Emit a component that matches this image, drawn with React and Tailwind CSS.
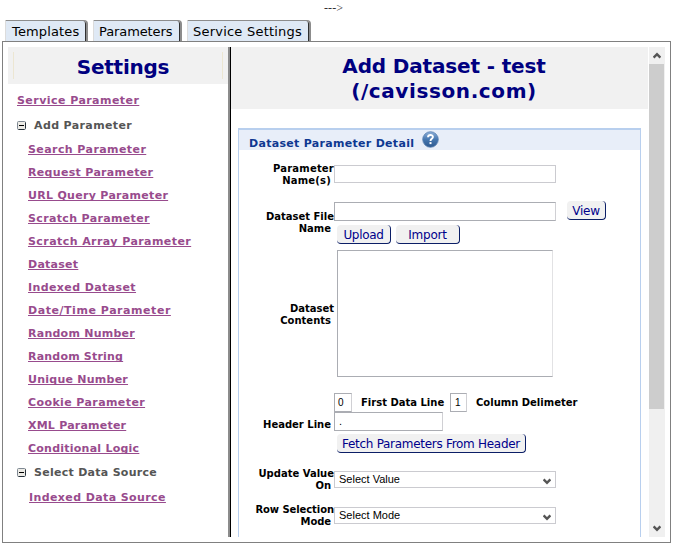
import React from "react";

const TABS = [
  { label: "Templates", box: "w-[83px]", text: "pl-[6px] tracking-[0.15px]" },
  { label: "Parameters", box: "w-[89px]", text: "pl-[5px] tracking-[-0.1px]" },
  { label: "Service Settings", box: "w-[124px]", text: "pl-[5px] tracking-[0.22px]" },
];

const PARAMETER_LINKS = [
  { name: "Search Parameter", spacing: "tracking-[0.42px]" },
  { name: "Request Parameter", spacing: "tracking-[0.32px]" },
  { name: "URL Query Parameter", spacing: "tracking-[0.3px]" },
  { name: "Scratch Parameter", spacing: "tracking-[0.35px]" },
  { name: "Scratch Array Parameter", spacing: "tracking-[0.43px]" },
  { name: "Dataset", spacing: "tracking-[0.26px]" },
  { name: "Indexed Dataset", spacing: "tracking-[0.4px]" },
  { name: "Date/Time Parameter", spacing: "tracking-[0.55px]" },
  { name: "Random Number", spacing: "tracking-[0.25px]" },
  { name: "Random String", spacing: "tracking-[0.2px]" },
  { name: "Unique Number", spacing: "tracking-[0.25px]" },
  { name: "Cookie Parameter", spacing: "tracking-[0.4px]" },
  { name: "XML Parameter", spacing: "tracking-[0.22px]" },
  { name: "Conditional Logic", spacing: "tracking-[0.24px]" },
];

function Tab({ label, box, text }) {
  return (
    <div className={`h-[21px] shrink-0 rounded-tr-[4px] border-t border-l border-r-2 border-t-[#8c8c8c] border-l-[#dcdcdc] border-r-[#8c8c8c] ${box}`}>
      <div className={`h-full rounded-tr-[3px] border-r border-[#303030] bg-[#dfe9f5] text-[13px] leading-[21px] whitespace-nowrap ${text}`}>
        {label}
      </div>
    </div>
  );
}

function SideLink({ spacing, children }) {
  return (
    <a className={`block h-[23px] text-[11px] leading-[23px] font-bold whitespace-nowrap text-[#984b8d] underline decoration-1 underline-offset-1 [text-decoration-skip-ink:none] ${spacing}`}>
      {children}
    </a>
  );
}

function Group({ spacing, children }) {
  return (
    <div className={`flex h-[23px] items-center gap-[8px] text-[11px] font-bold whitespace-nowrap text-[#555] ${spacing}`}>
      <svg className="h-[9px] w-[9px] shrink-0" viewBox="0 0 9 9">
        <rect x="0.5" y="0.5" width="8" height="8" rx="1" fill="#ecebe6" stroke="#7f8993" />
        <path d="M8.5 1.5V7.5M1.5 8.5H7.5" stroke="#26303a" />
        <path d="M2 4.5h5" stroke="#000" />
      </svg>
      <span className="pt-px">{children}</span>
    </div>
  );
}

function Label({ top, bottom, className }) {
  return (
    <div className={`w-[95px] shrink-0 text-right text-[10px] leading-[12px] font-bold whitespace-nowrap ${className}`}>
      {top && <div>{top}</div>}
      <div className="pr-[3px]">{bottom}</div>
    </div>
  );
}

function Field({ className, children }) {
  return (
    <div className={`shrink-0 border bg-white font-['Liberation_Sans',Arial,sans-serif] ${className}`}>
      {children}
    </div>
  );
}

function Button({ className, children }) {
  return (
    <div className={`h-[19px] shrink-0 rounded-[4px] border-r border-b border-[#0b1e66] bg-[#f1f1f1] text-center text-[12px] leading-[20px] whitespace-nowrap text-[#00008b] ${className}`}>
      {children}
    </div>
  );
}

function Chevron({ up }) {
  return (
    <svg className={up ? "h-[7px] w-[8px] rotate-180" : "h-[7px] w-[8px]"} viewBox="0 0 8 7">
      <path d="M0.6 1.4L4 4.8L7.4 1.4" fill="none" stroke="#555" strokeWidth="2.5" />
    </svg>
  );
}

function Select({ children }) {
  return (
    <div className="flex h-[17px] w-[222px] shrink-0 items-center justify-between border border-[#cbcbd0] pr-[4px] pl-[4px] font-['Liberation_Sans',Arial,sans-serif] text-[11px] leading-[15px]">
      <span>{children}</span>
      <span className="flex pt-[4px]"><Chevron /></span>
    </div>
  );
}

function HelpIcon() {
  return (
    <svg className="mt-px h-[17px] w-[17px]" viewBox="0 0 17 17">
      <defs>
        <linearGradient id="help" x1="0" y1="0" x2="0" y2="1">
          <stop offset="0" stopColor="#8fb0d8" />
          <stop offset="0.5" stopColor="#4677b0" />
          <stop offset="1" stopColor="#2c588f" />
        </linearGradient>
      </defs>
      <circle cx="8.5" cy="8.5" r="7.8" fill="url(#help)" stroke="#5a82b2" strokeWidth="0.8" />
      <path d="M6 6.2C6.1 3.3 11 3.4 10.9 6C10.9 7.8 8.5 7.9 8.5 9.9" fill="none" stroke="#fff" strokeWidth="1.9" />
      <rect x="7.5" y="11.1" width="2" height="2" fill="#fff" />
    </svg>
  );
}

function Sidebar() {
  return (
    <div className="w-[220px] shrink-0">
      <div className="flex h-[37px] bg-[#f1f1f1] px-[5px] py-[5px]">
        <h1 className="w-full border-x border-[#ece6d2] pl-[10px] text-center text-[20px] leading-[30px] font-bold tracking-[-0.25px] text-[#000080]">
          Settings
        </h1>
      </div>
      <div className="pt-[5px] pl-[9px]">
        <SideLink spacing="tracking-[0.45px]">Service Parameter</SideLink>
        <div className="pt-[2px]"><Group spacing="tracking-[0.38px]">Add Parameter</Group></div>
        <div className="pt-[1px] pl-[11px]">
          {PARAMETER_LINKS.map(({ name, spacing }) => <SideLink key={name} spacing={spacing}>{name}</SideLink>)}
        </div>
        <div className="pt-[1px]"><Group spacing="tracking-[0.28px]">Select Data Source</Group></div>
        <div className="pt-[2px] pl-[12px]"><SideLink spacing="tracking-[0.4px]">Indexed Data Source</SideLink></div>
      </div>
    </div>
  );
}

function DatasetForm() {
  return (
    <div className="h-[387px]">
      <div className="flex h-[40px]">
        <Label className="pt-[13px] tracking-[0.2px]" top="Parameter" bottom="Name(s)" />
        <Field className="mt-[15px] h-[18px] w-[222px] border-[#cbcbd0]" />
      </div>
      <div className="flex h-[57px]">
        <Label className="pt-[21px]" top="Dataset File" bottom="Name" />
        <div>
          <div className="flex gap-[11px] pt-[11px]">
            <Field className="mt-[1px] h-[19px] w-[222px] border-[#abadb3] border-r-[#d0d0d4]" />
            <Button className="w-[39px] tracking-[-0.2px]">View</Button>
          </div>
          <div className="flex gap-[5px] pt-[4px] pl-[3px]">
            <Button className="w-[54px] tracking-[-0.3px]">Upload</Button>
            <Button className="w-[64px] tracking-[-0.2px]">Import</Button>
          </div>
        </div>
      </div>
      <div className="flex h-[145px]">
        <Label className="pt-[56px]" top="Dataset" bottom="Contents" />
        <Field className="mt-[3px] ml-[3px] h-[127px] w-[216px] border-[#abadb3] border-r-[#e2e2e4]" />
      </div>
      <div className="flex h-[71px]">
        <Label className="pt-[27px]" bottom="Header Line" />
        <div className="pt-[1px]">
          <div className="flex text-[10px] leading-[19px] font-bold whitespace-nowrap">
            <Field className="h-[19px] w-[18px] border-[#abadb3] border-r-[#d0d0d4] pl-[3px] leading-[17px] font-normal">0</Field>
            <span className="w-[98px] pl-[9px]">First Data Line</span>
            <Field className="h-[19px] w-[17px] border-[#abadb3] border-r-[#d0d0d4] pl-[4px] leading-[17px] font-normal">1</Field>
            <span className="pl-[9px]">Column Delimeter</span>
          </div>
          <Field className="h-[19px] w-[109px] border-[#abadb3] border-r-[#d0d0d4] pl-[4px] text-[11px] leading-[17px]">.</Field>
          <div className="pt-[3px] pl-[3px]"><Button className="w-[189px] tracking-[-0.29px]">Fetch Parameters From Header</Button></div>
        </div>
      </div>
      <div className="flex h-[36px]">
        <Label className="pt-[5px]" top="Update Value" bottom="On" />
        <div className="pt-[8px]"><Select>Select Value</Select></div>
      </div>
      <div className="flex h-[36px]">
        <Label className="pt-[5px] tracking-[-0.08px]" top="Row Selection" bottom="Mode" />
        <div className="pt-[8px]"><Select>Select Mode</Select></div>
      </div>
    </div>
  );
}

export default function App() {
  return (
    <div className="h-[560px] w-[689px] overflow-hidden bg-white font-['DejaVu_Sans',Verdana,sans-serif] text-black">
      <div className="h-[20px] pl-[324px] font-['Liberation_Serif',serif] text-[12px] leading-[17px] tracking-[0.1px] text-[#333]">---&gt;</div>
      <div className="flex gap-[5px] pl-[5px]">
        {TABS.map((tab) => <Tab key={tab.label} {...tab} />)}
      </div>
      <div className="ml-[2px] flex h-[502px] w-[669px] border border-[#808080] p-[5px]">
        <Sidebar />
        <div className="w-[3px] shrink-0 border-r border-black bg-[#8c8c8c]" />
        <div className="h-[490px] w-[417px] shrink-0 overflow-hidden">
          <h1 className="h-[62px] bg-[#f1f1f1] pt-[7px] pl-[9px] text-center text-[20px] leading-[25px] font-bold text-[#000080]">
            <span className="tracking-[-0.15px]">Add Dataset - test</span>
            <br />
            <span className="tracking-[0.6px]">(/cavisson.com)</span>
          </h1>
          <div className="mt-[19px] ml-[7px] w-[403px] border-x border-t-2 border-[#b8cfee]">
            <div className="flex h-[20px] gap-[8px] bg-[#e8eef9] pl-[10px] text-[11px] leading-[27px] font-bold whitespace-nowrap text-[#0e3891]">
              <span className="w-[165px] tracking-[0.3px]">Dataset Parameter Detail</span>
              <HelpIcon />
            </div>
            <DatasetForm />
          </div>
        </div>
        <div className="ml-[1px] flex w-[16px] shrink-0 flex-col items-center bg-[#f0f0f0]">
          <div className="flex h-[17px] items-center"><Chevron up /></div>
          <div className="mr-[1px] h-[345px] w-[15px] bg-[#cdcdcd]" />
          <div className="mt-auto flex h-[17px] items-center"><Chevron /></div>
        </div>
      </div>
    </div>
  );
}
